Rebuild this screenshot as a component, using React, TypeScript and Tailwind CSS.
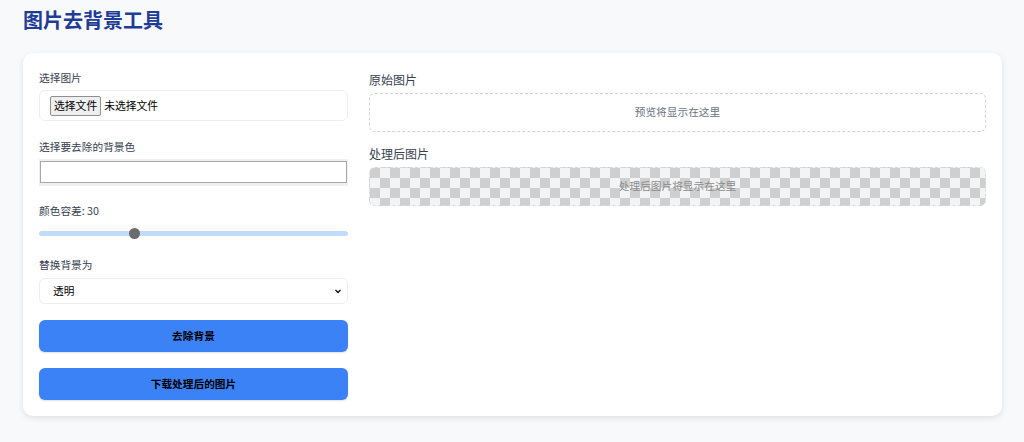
import React from "react";

const font = "font-['Noto_Sans_CJK_SC','Noto_Sans',sans-serif]";

function Label({ children }: { children: React.ReactNode }) {
  return <div className="h-[16px] text-[10.7px] leading-[16px] text-[#374151]">{children}</div>;
}

export default function App() {
  return (
    <div className={`min-h-[442px] bg-[#f8f9fb] pl-[23px] pr-[22px] pt-[6px] ${font}`}>
      <h1 className="h-[28px] text-[20px] font-bold leading-[28px] text-[#1f3c96]">图片去背景工具</h1>
      <div className="mt-[19px] grid grid-cols-[309px_1fr] gap-[21px] rounded-[10px] bg-white px-[16px] pb-[16px] pt-[17px] shadow-[0_2px_6px_rgba(0,0,0,0.1)]">
        <div className="flex flex-col">
          <Label>选择图片</Label>
          <div className="mt-[4px] flex h-[31px] items-center rounded-[6px] border border-[#eceef1] pl-[10px]">
            <span className="flex h-[20px] items-center rounded-[2px] border border-[#8f8f8f] bg-[#efefef] px-[3px] text-[10.8px] text-black">选择文件</span>
            <span className="ml-[3px] text-[10.8px] text-black">未选择文件</span>
          </div>

          <div className="mt-[18px]">
            <Label>选择要去除的背景色</Label>
          </div>
          <div className="mt-[4px] h-[27px] bg-[#f0f0f0] px-[1px] pb-[3px] pt-[2px]">
            <div className="h-full border border-[#a8a8a8] bg-white" />
          </div>

          <div className="mt-[17px]">
            <Label>颜色容差: 30</Label>
          </div>
          <div className="relative mt-[9px] h-[10px]">
            <div className="absolute left-0 right-0 top-[3px] h-[4.5px] rounded-full bg-[#bfdbfe]" />
            <div className="absolute left-[90px] top-0 h-[10.5px] w-[10.5px] rounded-full bg-[#6b6b6b]" />
          </div>

          <div className="mt-[19px]">
            <Label>替换背景为</Label>
          </div>
          <div className="mt-[5px] flex h-[26px] items-center justify-between rounded-[6px] border border-[#eceef1] pl-[13px] pr-[5px]">
            <span className="text-[10.7px] text-black">透明</span>
            <svg width="8" height="8" viewBox="0 0 8 8">
              <path d="M1.5 3 L4 5.5 L6.5 3" fill="none" stroke="#111" strokeWidth="1.4" />
            </svg>
          </div>

          <button className="mt-[16px] flex h-[32px] items-center justify-center rounded-[6px] bg-[#3b82f6] text-[10.7px] font-bold text-black shadow-[0_1px_2px_rgba(0,0,0,0.12)]">
            去除背景
          </button>
          <button className="mt-[16px] flex h-[32px] items-center justify-center rounded-[6px] bg-[#3b82f6] text-[10.7px] font-bold text-black shadow-[0_1px_2px_rgba(0,0,0,0.12)]">
            下载处理后的图片
          </button>
        </div>

        <div className="flex flex-col">
          <div className="mt-[1px] h-[17px] text-[12px] leading-[17px] text-[#374151]">原始图片</div>
          <div className="mt-[5px] flex h-[39px] items-center justify-center rounded-[6px] border border-dashed border-[#cfd3d8] text-[10.7px] text-[#6b7280]">
            预览将显示在这里
          </div>
          <div className="mt-[13px] h-[17px] text-[12px] leading-[17px] text-[#374151]">处理后图片</div>
          <div className="mt-[5px] flex h-[39px] items-center justify-center rounded-[6px] border border-dashed border-[#dcdcdc] bg-[image:conic-gradient(#f3f4f6_25%,#cfcfcf_0_50%,#f3f4f6_0_75%,#cfcfcf_0)] bg-[length:20px_20px] text-[10.7px] text-[#8a8a8a]">
            处理后图片将显示在这里
          </div>
        </div>
      </div>
    </div>
  );
}
